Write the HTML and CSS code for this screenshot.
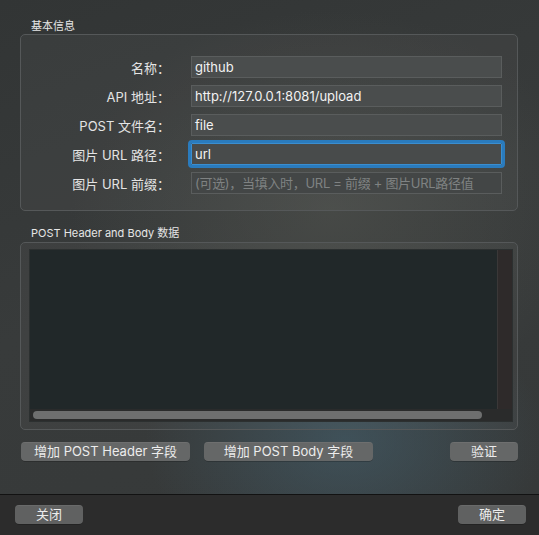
FILE: index.html
```html
<!DOCTYPE html>
<html lang="zh">
<head>
<meta charset="utf-8">
<link rel="stylesheet" href="styles.css">
</head>
<body>
<div class="window">
  <div class="main">
    <div class="group-title">基本信息</div>
    <div class="group basic">
      <div class="row"><div class="label">名称：</div><div class="field">github</div></div>
      <div class="row"><div class="label">API 地址：</div><div class="field">http://127.0.0.1:8081/upload</div></div>
      <div class="row"><div class="label">POST 文件名：</div><div class="field">file</div></div>
      <div class="row"><div class="label">图片 URL 路径：</div><div class="field focus">url</div></div>
      <div class="row"><div class="label">图片 URL 前缀：</div><div class="field placeholder">(可选)，当填入时，URL = 前缀 + 图片URL路径值</div></div>
    </div>
    <div class="group-title second">POST Header and Body 数据</div>
    <div class="group data">
      <div class="textarea">
        <div class="text-body"></div>
        <div class="vscroll"></div>
        <div class="hscroll"><div class="thumb"></div></div>
        <div class="corner"></div>
      </div>
    </div>
    <div class="actions">
      <div class="btn wide">增加 POST Header 字段</div>
      <div class="btn wide">增加 POST Body 字段</div>
      <div class="spacer"></div>
      <div class="btn small">验证</div>
    </div>
  </div>
  <div class="footer">
    <div class="btn small">关闭</div>
    <div class="btn small">确定</div>
  </div>
</div>
</body>
</html>
```

FILE: styles.css
```css
* { box-sizing: border-box; }
html, body { margin: 0; padding: 0; }
body {
  width: 539px;
  height: 535px;
  overflow: hidden;
  font-family: "Inter", "Noto Sans CJK SC", sans-serif;
  color: #e2e3e3;
  background: #2b2c2c;
}
.window {
  width: 539px;
  height: 535px;
  display: flex;
  flex-direction: column;
}
.main {
  height: 495px;
  padding: 19px 21px 0 20px;
  background:
    radial-gradient(ellipse 200px 140px at 345px 440px, rgba(70, 100, 115, 0.55), rgba(70, 100, 115, 0) 100%),
    radial-gradient(ellipse 260px 200px at 330px 210px, rgba(88, 90, 84, 0.45), rgba(88, 90, 84, 0) 100%),
    linear-gradient(160deg, #323535 0%, #383b3b 50%, #363939 100%);
  border-bottom: 1px solid #121212;
}
.group-title {
  font-size: 11px;
  line-height: 14px;
  height: 15px;
  padding-left: 11px;
  color: #e6e6e6;
}
.group-title.second { margin-top: 15px; height: 16px; }
.group {
  border: 1px solid #555859;
  border-radius: 5px;
  background: rgba(255, 255, 255, 0.035);
}
.basic {
  height: 177px;
  padding: 21px 15px 0 0;
  display: flex;
  flex-direction: column;
  gap: 7px;
}
.row {
  display: flex;
  align-items: center;
  height: 22px;
}
.label {
  width: 170px;
  text-align: right;
  font-size: 13px;
  padding-right: 21px;
  color: #e4e4e4;
}
.field {
  flex: 1;
  height: 22px;
  line-height: 21px;
  font-size: 13px;
  padding-left: 3px;
  background: #4a4d4d;
  border: 1px solid #5a5d5d;
  color: #f2f2f2;
  white-space: nowrap;
  overflow: hidden;
}
.field.focus {
  outline: 3px solid #2a7bbd;
  outline-offset: 0;
  border-color: #3a8ed0;
  border-radius: 1px;
  background: #484b4b;
}
.field.placeholder {
  color: #7f8282;
  background: #434646;
  letter-spacing: -0.3px;
}
.data {
  height: 188px;
  padding: 6px 4px 0 8px;
}
.textarea {
  height: 173px;
  display: grid;
  grid-template-columns: 1fr 15px;
  grid-template-rows: 1fr 12px;
  background: #222829;
  border: 1px solid #2c3030;
}
.text-body { background: #212829; }
.vscroll { background: #2e2a2a; border-left: 1px solid #3a3838; }
.corner { background: #2a2b2b; }
.hscroll {
  background: #2a2b2b;
  padding: 2px 15px 2px 3px;
}
.thumb {
  height: 8px;
  border-radius: 4px;
  background: #6e6f6f;
}
.actions {
  display: flex;
  align-items: center;
  margin-top: 12px;
  padding-left: 1px;
  gap: 14px;
}
.spacer { flex: 1; }
.btn {
  height: 19px;
  line-height: 19px;
  font-size: 13px;
  text-align: center;
  background: #656767;
  border-radius: 4px;
  color: #ececec;
  box-shadow: 0 0.5px 0 rgba(0,0,0,0.4), inset 0 0.5px 0 rgba(255,255,255,0.12);
}
.btn.wide { width: 169px; }
.btn.small { width: 68px; }
.footer {
  flex: 1;
  background: #2c2c2c;
  display: flex;
  justify-content: space-between;
  align-items: flex-start;
  padding: 10px 13px 0 15px;
}
.footer .btn { background: #606161; }
```
